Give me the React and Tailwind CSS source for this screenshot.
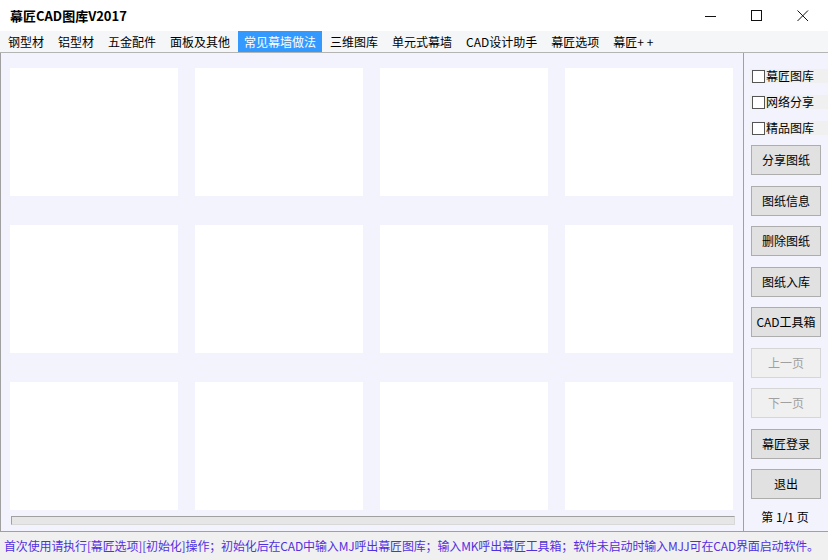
import React from "react";

const menus = ["钢型材", "铝型材", "五金配件", "面板及其他", "常见幕墙做法", "三维图库", "单元式幕墙", "CAD设计助手", "幕匠选项", "幕匠+ +"];
const checks = ["幕匠图库", "网络分享", "精品图库"];
const buttons = [
  { label: "分享图纸" },
  { label: "图纸信息" },
  { label: "删除图纸" },
  { label: "图纸入库" },
  { label: "CAD工具箱" },
  { label: "上一页", disabled: true },
  { label: "下一页", disabled: true },
  { label: "幕匠登录" },
  { label: "退出" },
];

const App = () => {
  return (
    <div
      className="w-[828px] h-[560px] flex flex-col bg-white overflow-hidden text-black"
      style={{ fontFamily: '"Noto Sans CJK SC", "Noto Sans", sans-serif' }}
    >
      {/* title bar */}
      <div className="h-[31px] flex items-center justify-between shrink-0">
        <span className="pl-[10px] text-[13px] font-bold">幕匠CAD图库V2017</span>
        <div className="flex h-full pr-[2px]">
          <div className="w-[46px] h-full flex items-center justify-center">
            <svg width="12" height="12" viewBox="0 0 12 12">
              <line x1="0" y1="6.5" x2="11" y2="6.5" stroke="#111" strokeWidth="1" />
            </svg>
          </div>
          <div className="w-[46px] h-full flex items-center justify-center">
            <svg width="12" height="12" viewBox="0 0 12 12">
              <rect x="0.5" y="0.5" width="10" height="10" fill="none" stroke="#111" strokeWidth="1" />
            </svg>
          </div>
          <div className="w-[46px] h-full flex items-center justify-center">
            <svg width="12" height="12" viewBox="0 0 12 12">
              <path d="M0.5 0.5 L11 11 M11 0.5 L0.5 11" stroke="#111" strokeWidth="1" />
            </svg>
          </div>
        </div>
      </div>

      {/* menu bar */}
      <div className="h-[22px] flex items-stretch pl-[2px] gap-[2px] bg-[#f5f6f7] border-b border-[#b4b4b4] shrink-0">
        {menus.map((m, i) => (
          <div
            key={m}
            className={
              "px-[6px] flex items-center text-[12px] leading-none " +
              (i === 4 ? "bg-[#3399ff] text-white" : "")
            }
          >
            {m}
          </div>
        ))}
      </div>

      {/* body */}
      <div className="flex-1 flex min-h-0">
        <div className="w-[743px] border-l border-[#a0a0a0] bg-[#f2f3fd] pt-[15px] pl-[9px] flex flex-col">
          <div className="grid grid-cols-[168px_168px_168px_168px] gap-x-[17px] gap-y-[29px]">
            {Array.from({ length: 12 }).map((_, i) => (
              <div key={i} className="h-[128px] bg-white" />
            ))}
          </div>
          <div className="mt-[6px] ml-[1px] w-[724px] h-[9px] bg-[#e6e6e6] border border-[#a0a0a0] border-b-[#d8d8d8] border-r-[#d8d8d8]" />
        </div>

        <div className="w-[85px] border-l border-[#a0a0a0] bg-[#f2f3fd] flex flex-col pt-[16px]">
          <div className="flex flex-col gap-[12px]">
            {checks.map((c) => (
              <div key={c} className="ml-[6px] pl-[2px] h-[14px] flex items-center bg-[#f0f0f0] text-[12px]">
                <span className="w-[13px] h-[13px] border border-[#555] bg-white mr-[1px] shrink-0" />
                <span className="leading-none">{c}</span>
              </div>
            ))}
          </div>
          <div className="flex flex-col gap-[10.5px] mt-[10px] ml-[7px]">
            {buttons.map((b) => (
              <div
                key={b.label}
                className={
                  "w-[70px] h-[30px] flex items-center justify-center text-[12px] border " +
                  (b.disabled
                    ? "bg-[#f0f0f0] border-[#d6d6d6] text-[#a0a0a0]"
                    : "bg-[#e1e1e1] border-[#adadad] text-black")
                }
              >
                {b.label}
              </div>
            ))}
          </div>
          <div className="mt-[9px] text-center text-[12px] pr-[2px]">第 1/1 页</div>
        </div>
      </div>

      {/* status bar */}
      <div className="h-[29px] shrink-0 bg-[#f0f0f0] border-t border-[#a0a0a0] flex items-center pl-[4px] text-[12px] tracking-[-0.15px] text-[#5230e0] whitespace-nowrap">
        首次使用请执行[幕匠选项][初始化]操作；初始化后在CAD中输入MJ呼出幕匠图库；输入MK呼出幕匠工具箱；软件未启动时输入MJJ可在CAD界面启动软件。
      </div>
    </div>
  );
};

export default App;
